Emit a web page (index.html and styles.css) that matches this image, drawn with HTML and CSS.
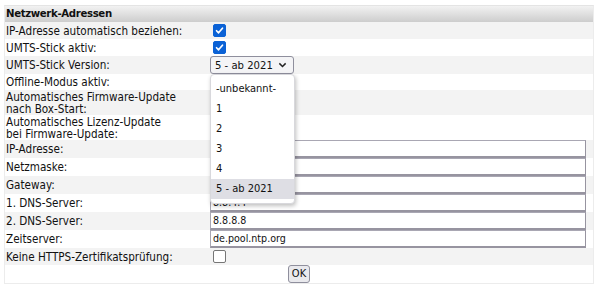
FILE: index.html
```html
<!DOCTYPE html>
<html lang="de">
<head>
<meta charset="utf-8">
<link rel="stylesheet" href="styles.css">
</head>
<body>
<div class="panel">
<table class="form">
<tr class="head"><th colspan="2">Netzwerk-Adressen</th></tr>
<tr class="odd r17"><td class="label">IP-Adresse automatisch beziehen:</td><td><span class="cb on"><svg viewBox="0 0 13 13"><path d="M3 6.8 L5.4 9.2 L10 3.8" /></svg></span></td></tr>
<tr class="r17"><td class="label">UMTS-Stick aktiv:</td><td><span class="cb on"><svg viewBox="0 0 13 13"><path d="M3 6.8 L5.4 9.2 L10 3.8" /></svg></span></td></tr>
<tr class="odd r18"><td class="label">UMTS-Stick Version:</td><td>
  <div class="selwrap">
    <div class="select"><span>5 - ab 2021</span><svg class="chev" viewBox="0 0 10 6"><path d="M1.5 1.2 L5 4.6 L8.5 1.2"/></svg></div>
    <div class="popup">
      <div class="opt">-unbekannt-</div>
      <div class="opt">1</div>
      <div class="opt">2</div>
      <div class="opt">3</div>
      <div class="opt">4</div>
      <div class="opt sel">5 - ab 2021</div>
    </div>
  </div>
</td></tr>
<tr class="r16"><td class="label">Offline-Modus aktiv:</td><td></td></tr>
<tr class="odd r25"><td class="label">Automatisches Firmware-Update<br>nach Box-Start:</td><td></td></tr>
<tr class="r25"><td class="label">Automatisches Lizenz-Update<br>bei Firmware-Update:</td><td></td></tr>
<tr class="odd r18"><td class="label">IP-Adresse:</td><td><div class="inp"></div></td></tr>
<tr class="r18"><td class="label">Netzmaske:</td><td><div class="inp"></div></td></tr>
<tr class="odd r18"><td class="label">Gateway:</td><td><div class="inp"></div></td></tr>
<tr class="r18"><td class="label">1. DNS-Server:</td><td><div class="inp">8.8.4.4</div></td></tr>
<tr class="odd r18"><td class="label">2. DNS-Server:</td><td><div class="inp">8.8.8.8</div></td></tr>
<tr class="r18"><td class="label">Zeitserver:</td><td><div class="inp">de.pool.ntp.org</div></td></tr>
<tr class="odd r17"><td class="label">Keine HTTPS-Zertifikatsprüfung:</td><td><span class="cb"></span></td></tr>
<tr class="r17"><td colspan="2" class="center"><span class="btn">OK</span></td></tr>
</table>
</div>
</body>
</html>
```
FILE: styles.css
```css
html, body { margin: 0; padding: 0; background: #fff; }
body {
  font-family: "DejaVu Sans Condensed", "DejaVu Sans", sans-serif;
  font-size: 11.6px;
  color: #111;
}
.panel {
  margin: 5px 6px 0 4px;
  border: 1px solid #ececec;
  border-top-color: #e4e4e4;
}
.form {
  width: 100%;
  border-collapse: collapse;
  border-spacing: 0;
}
.form td, .form th { padding: 0; vertical-align: middle; }
.head th {
  height: 16px;
  text-align: left;
  font-weight: bold;
  font-size: 11.3px;
  letter-spacing: -0.35px;
  padding-left: 1px;
  background: linear-gradient(#f2f2f2, #cdcdcd);
  line-height: 16px;
}
.odd { background: #f3f3f3; }
.r16 td { height: 16px; }
.r17 td { height: 17px; }
.r18 td { height: 18px; }
.r25 td { height: 25px; }
.label {
  width: 204px;
  padding-left: 1px !important;
  line-height: 12px;
  white-space: nowrap;
}
.cb {
  display: block;
  width: 11px;
  height: 11px;
  margin-left: 3px;
  border: 1px solid #767676;
  border-radius: 2px;
  background: #fff;
  box-sizing: content-box;
}
.cb.on {
  background: #0b62d6;
  border-color: #0b62d6;
}
.cb svg { display: block; width: 11px; height: 11px; }
.cb svg path { fill: none; stroke: #fff; stroke-width: 2; stroke-linecap: round; stroke-linejoin: round; }
.selwrap { position: relative; width: 84px; }
.select {
  height: 16px;
  border: 1px solid #8f8f9d;
  border-radius: 3px;
  background: #f4f4f6;
  display: flex;
  align-items: center;
  padding-left: 4px;
  font-size: 11.2px;
  white-space: nowrap;
}
.select span { flex: 1; }
.chev { width: 9px; height: 6px; margin-right: 6px; }
.chev path { fill: none; stroke: #222; stroke-width: 1.6; }
.popup {
  position: absolute;
  left: 0;
  top: 18px;
  width: 83px;
  padding: 4px 0;
  background: #fff;
  border: 1px solid #d8d8dc;
  border-radius: 4px;
  box-shadow: 1px 2px 4px rgba(0,0,0,0.25);
  z-index: 5;
}
.opt {
  height: 20px;
  line-height: 20px;
  padding-left: 5px;
  font-size: 11px;
  white-space: nowrap;
}
.opt.sel { background: #dedee4; }
.inp {
  margin-right: 7px;
  border: 1px solid #a9a7b3;
  border-right-color: #9794a0;
  border-bottom-color: #9794a0;
  border-bottom-width: 2px;
  height: 15px;
  background: #fff;
  line-height: 15px;
  padding-left: 2px;
  font-size: 10.6px;
}
.center { text-align: center; }
.btn {
  display: inline-block;
  height: 16px;
  line-height: 16px;
  padding: 0 3px;
  border: 1px solid #8f8f9d;
  border-radius: 3px;
  background: #e9e9ed;
  font-size: 11px;
  vertical-align: middle;
}
```
